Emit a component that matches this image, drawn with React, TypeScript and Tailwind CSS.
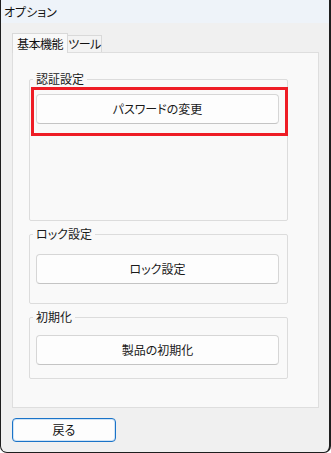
import React from "react";

const font = "font-['Noto_Sans_CJK_JP','Noto_Sans',sans-serif] [font-feature-settings:'palt']";

function GroupBox({
  label,
  className,
  children,
}: {
  label: string;
  className: string;
  children: React.ReactNode;
}) {
  return (
    <div className={`relative border border-[#dcdcdc] rounded-[2px] ${className}`}>
      <span className="absolute left-[3px] top-[-9px] bg-[#f9f9f9] px-[3px] text-[12px] leading-[16px] text-[#1a1a1a]">
        {label}
      </span>
      {children}
    </div>
  );
}

function Btn({ text }: { text: string }) {
  return (
    <button className="w-[243px] h-[30px] flex items-center justify-center rounded-[4px] border border-[#d6d6d6] border-b-[#c4c4c4] bg-[#fdfdfd] text-[12px] text-[#1a1a1a]">
      {text}
    </button>
  );
}

export default function App() {
  return (
    <div
      className={`${font} w-[331px] h-[453px] flex flex-col bg-[#f0f0f0] border-l border-r-2 border-b border-[#1e1e1e] rounded-b-[7px] overflow-hidden`}
    >
      <div className="h-[23px] shrink-0 bg-[#eef3f9] flex items-center pl-[3px] text-[12px] text-[#111]">
        オプション
      </div>
      <div className="flex flex-col pl-[11px] pr-[10px]">
        <div className="flex items-end h-[29px] pt-[10px]">
          <div className="h-[20px] w-[56px] whitespace-nowrap bg-[#f9f9f9] border border-b-0 border-[#d9d9d9] flex items-center justify-center text-[12px] tracking-[-0.5px] text-[#111] relative z-10 mb-[-1px]">
            基本機能
          </div>
          <div className="h-[17px] w-[34px] whitespace-nowrap bg-[#f3f3f3] border border-l-0 border-b-0 border-[#d9d9d9] flex items-center justify-center text-[12px] tracking-[-0.5px] text-[#111]">
            ツール
          </div>
        </div>
        <div className="h-[356px] bg-[#f9f9f9] border border-[#dedede] pl-[16px] pt-[26px]">
          <GroupBox label="認証設定" className="w-[259px] h-[142px] pl-[6px] pt-[14px]">
            <Btn text="パスワードの変更" />
            <div className="absolute left-[1px] top-[7px] w-[257px] h-[49px] border-[3px] border-[#ee1c25]" />
          </GroupBox>
          <GroupBox label="ロック設定" className="mt-[13px] w-[259px] h-[70px] pl-[6px] pt-[19px]">
            <Btn text="ロック設定" />
          </GroupBox>
          <GroupBox label="初期化" className="mt-[13px] w-[259px] h-[62px] pl-[6px] pt-[17px]">
            <Btn text="製品の初期化" />
          </GroupBox>
        </div>
        <div className="pt-[10px]">
          <button className="w-[104px] h-[24px] flex items-center justify-center rounded-[4px] border border-[#1a73c8] bg-[#fdfdfd] text-[12px] text-[#111] shadow-[inset_0_0_0_1px_#cfe3f5]">
            戻る
          </button>
        </div>
      </div>
    </div>
  );
}
